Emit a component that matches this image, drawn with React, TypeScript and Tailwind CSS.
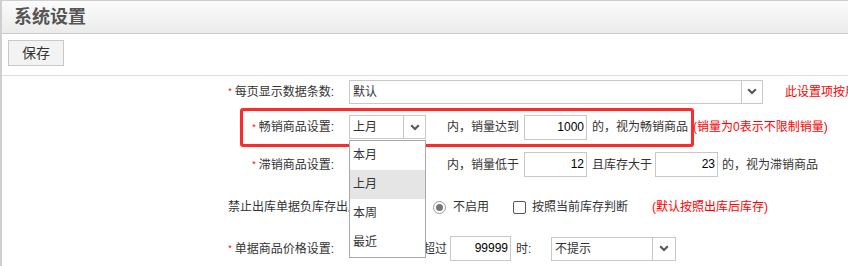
import React from "react";

// simple select look-alike
function FakeSelect({ value, width, arrow }: { value: string; width: string; arrow: string }) {
    return (
        <div className={`shrink-0 flex h-[24px] border border-[#c8c8c8] bg-white ${width}`}>
            <div className="flex-1 pl-[3px] text-[12px] leading-[22px] text-[#333] whitespace-nowrap overflow-hidden">{value}</div>
            <div className={`flex items-center justify-center border-l border-[#c8c8c8] ${arrow}`}>
                <svg width="10" height="7" viewBox="0 0 10 7">
                    <polyline points="1.2,1.2 5,5 8.8,1.2" fill="none" stroke="#555" strokeWidth="2" />
                </svg>
            </div>
        </div>
    );
}

function NumBox({ value, width }: { value: string; width: string }) {
    return (
        <div className={`shrink-0 h-[25px] border border-[#c8c8c8] bg-white pr-[2px] text-right text-[12px] leading-[23px] text-black ${width}`}>
            {value}
        </div>
    );
}

function Label({ text }: { text: string }) {
    return (
        <div className="shrink-0 w-[332px] flex justify-end items-center whitespace-nowrap">
            <span className="text-[9px] text-[#ff0000] mr-[3px] leading-none">*</span>
            <span>{text}</span>
        </div>
    );
}

export default function App() {
    return (
        <div className="relative w-[848px] h-[266px] overflow-hidden bg-white border-t border-l-2 border-[#cfcfcf] font-['Liberation_Sans','Noto_Sans_CJK_SC',sans-serif] text-[12px] text-[#333]">
            {/* title bar */}
            <div className="h-[33px] border-b border-[#cccccc] bg-linear-to-b from-[#fbfbfb] to-[#ebebeb] pl-[12px] flex items-center">
                <span className="text-[18px] font-bold text-[#555] leading-none">系统设置</span>
            </div>

            {/* toolbar */}
            <div className="h-[42px] border-b border-[#dddddd] pt-[6px] pl-[6px]">
                <button className="w-[56px] h-[26px] border border-[#c8c8c8] bg-[#f3f3f3] text-[14px] text-[#333] leading-[24px]">保存</button>
            </div>

            {/* form rows */}
            <div className="flex flex-col">
                <div className="h-[31px] flex items-center">
                    <Label text="每页显示数据条数:" />
                    <div className="shrink-0 ml-[15px]"><FakeSelect value="默认" width="w-[414px]" arrow="w-[21px]" /></div>
                    <span className="shrink-0 ml-[22px] text-[#ff0000] whitespace-nowrap">此设置项按用户分别保存</span>
                </div>

                <div className="h-[40px] flex items-center">
                    <Label text="畅销商品设置:" />
                    <div className="shrink-0 ml-[15px]"><FakeSelect value="上月" width="w-[77px]" arrow="w-[22px]" /></div>
                    <span className="shrink-0 ml-[21px] whitespace-nowrap">内，销量达到</span>
                    <div className="shrink-0 ml-[5px]"><NumBox value="1000" width="w-[63px]" /></div>
                    <span className="shrink-0 ml-[5px] whitespace-nowrap">的，视为畅销商品</span>
                    <span className="shrink-0 ml-[5px] text-[#ff0000] whitespace-nowrap">(销量为0表示不限制销量)</span>
                </div>

                <div className="h-[35px] flex items-center">
                    <Label text="滞销商品设置:" />
                    {/* select hidden under the open list */}
                    <div className="shrink-0 ml-[15px]"><FakeSelect value="" width="w-[77px]" arrow="w-[22px]" /></div>
                    <span className="shrink-0 ml-[21px] whitespace-nowrap">内，销量低于</span>
                    <div className="shrink-0 ml-[5px]"><NumBox value="12" width="w-[63px]" /></div>
                    <span className="shrink-0 ml-[5px] whitespace-nowrap">且库存大于</span>
                    <div className="shrink-0 ml-[3px]"><NumBox value="23" width="w-[63px]" /></div>
                    <span className="shrink-0 ml-[4px] whitespace-nowrap">的，视为滞销商品</span>
                </div>

                <div className="h-[50px] flex items-center">
                    <div className="shrink-0 w-[347px] pl-[226px] whitespace-nowrap overflow-hidden">禁止出库单据负库存出库:</div>
                    <div className="shrink-0 w-[84px]" />
                    <span className="shrink-0 w-[13px] h-[13px] rounded-full border border-[#9a9a9a] flex items-center justify-center">
                        <span className="w-[7px] h-[7px] rounded-full bg-[#777]" />
                    </span>
                    <span className="shrink-0 ml-[7px] whitespace-nowrap">不启用</span>
                    <span className="shrink-0 ml-[24px] w-[13px] h-[13px] rounded-[2px] border border-[#555] bg-white" />
                    <span className="shrink-0 ml-[6px] whitespace-nowrap">按照当前库存判断</span>
                    <span className="shrink-0 ml-[24px] text-[#ff0000] whitespace-nowrap">(默认按照出库后库存)</span>
                </div>

                <div className="h-[33px] flex items-center">
                    <Label text="单据商品价格设置:" />
                    <div className="shrink-0 ml-[15px] w-[98px] flex justify-end whitespace-nowrap">超过</div>
                    <div className="shrink-0 ml-[3px]"><NumBox value="99999" width="w-[61px]" /></div>
                    <span className="shrink-0 ml-[5px] w-[35px] whitespace-nowrap">时:</span>
                    <FakeSelect value="不提示" width="w-[125px]" arrow="w-[23px]" />
                </div>
            </div>

            {/* highlight box */}
            <div className="absolute left-[238px] top-[107px] w-[454px] h-[39px] border-[3px] border-[#ff2a2a] rounded-[3px] pointer-events-none" />

            {/* open dropdown list */}
            <div className="absolute left-[347px] top-[139px] w-[77px] h-[118px] border border-[#a8a8a8] bg-white flex flex-col">
                <div className="h-[29px] pl-[3px] leading-[29px]">本月</div>
                <div className="h-[29px] pl-[3px] leading-[29px] bg-[#e5e5e5]">上月</div>
                <div className="h-[29px] pl-[3px] leading-[29px]">本周</div>
                <div className="h-[29px] pl-[3px] leading-[29px]">最近</div>
            </div>
        </div>
    );
}
